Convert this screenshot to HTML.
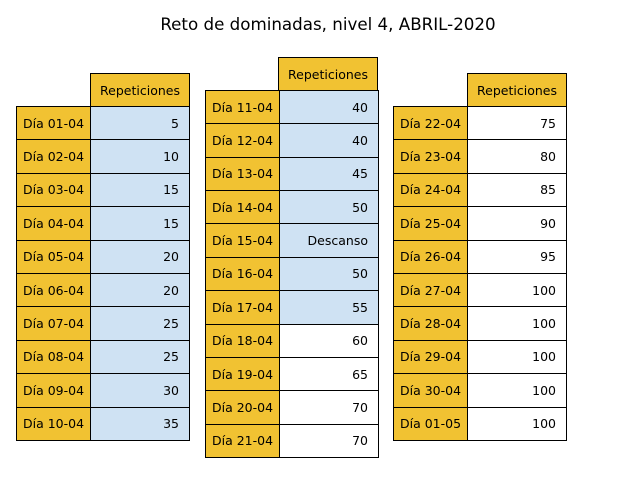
<!DOCTYPE html>
<html><head><meta charset="utf-8"><style>
*{box-sizing:border-box;margin:0;padding:0}
body{width:640px;height:480px;background:#fff;position:relative;font-family:"DejaVu Sans","Liberation Sans",sans-serif;font-size:12.5px;color:#000;overflow:hidden}
.t{position:absolute;top:14px;left:0;width:656px;text-align:center;font-size:16.7px}
.h{position:absolute;width:100px;height:35px;border:1px solid #000;background:#f1c232;display:flex;align-items:center;justify-content:center}
.b{position:absolute;width:174px;background:#000;padding:1px;display:grid;grid-template-columns:73px 1fr;gap:1px}
.b div{display:flex;align-items:center}
.l{background:#f1c232;justify-content:center}
.v{background:#cfe2f3;justify-content:flex-end;padding-right:10px}
.w{background:#fff}
</style></head><body>
<div class="t">Reto de dominadas, nivel 4, ABRIL-2020</div>

<div class="h" style="left:90px;top:73px">Repeticiones</div>
<div class="b" style="left:16px;top:106px;height:335px;grid-template-rows:repeat(10,1fr)">
<div class="l">Día 01-04</div><div class="v">5</div>
<div class="l">Día 02-04</div><div class="v">10</div>
<div class="l">Día 03-04</div><div class="v">15</div>
<div class="l">Día 04-04</div><div class="v">15</div>
<div class="l">Día 05-04</div><div class="v">20</div>
<div class="l">Día 06-04</div><div class="v">20</div>
<div class="l">Día 07-04</div><div class="v">25</div>
<div class="l">Día 08-04</div><div class="v">25</div>
<div class="l">Día 09-04</div><div class="v">30</div>
<div class="l">Día 10-04</div><div class="v">35</div>
</div>

<div class="h" style="left:278px;top:57px;height:34px">Repeticiones</div>
<div class="b" style="left:205px;top:90px;height:368px;grid-template-rows:repeat(11,1fr)">
<div class="l">Día 11-04</div><div class="v">40</div>
<div class="l">Día 12-04</div><div class="v">40</div>
<div class="l">Día 13-04</div><div class="v">45</div>
<div class="l">Día 14-04</div><div class="v">50</div>
<div class="l">Día 15-04</div><div class="v">Descanso</div>
<div class="l">Día 16-04</div><div class="v">50</div>
<div class="l">Día 17-04</div><div class="v">55</div>
<div class="l">Día 18-04</div><div class="v w">60</div>
<div class="l">Día 19-04</div><div class="v w">65</div>
<div class="l">Día 20-04</div><div class="v w">70</div>
<div class="l">Día 21-04</div><div class="v w">70</div>
</div>

<div class="h" style="left:467px;top:73px">Repeticiones</div>
<div class="b" style="left:393px;top:106px;height:335px;grid-template-rows:repeat(10,1fr)">
<div class="l">Día 22-04</div><div class="v w">75</div>
<div class="l">Día 23-04</div><div class="v w">80</div>
<div class="l">Día 24-04</div><div class="v w">85</div>
<div class="l">Día 25-04</div><div class="v w">90</div>
<div class="l">Día 26-04</div><div class="v w">95</div>
<div class="l">Día 27-04</div><div class="v w">100</div>
<div class="l">Día 28-04</div><div class="v w">100</div>
<div class="l">Día 29-04</div><div class="v w">100</div>
<div class="l">Día 30-04</div><div class="v w">100</div>
<div class="l">Día 01-05</div><div class="v w">100</div>
</div>
</body></html>
